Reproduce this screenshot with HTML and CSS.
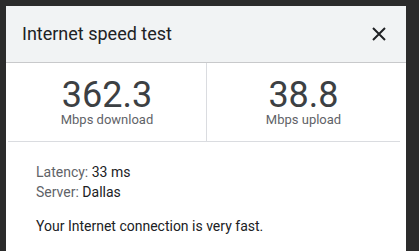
FILE: index.html
```html
<!DOCTYPE html>
<html>
<head>
<meta charset="utf-8">
<link rel="stylesheet" href="styles.css">
</head>
<body>
<div class="dialog">
  <div class="header">
    <div class="title">Internet speed test</div>
    <svg class="close" width="14" height="14" viewBox="0 0 14 14"><path d="M1 1L13 13M13 1L1 13" stroke="#202124" stroke-width="2" fill="none"/></svg>
  </div>
  <div class="stats">
    <div class="stat">
      <div class="num">362.3</div>
      <div class="unit">Mbps download</div>
    </div>
    <div class="stat">
      <div class="num">38.8</div>
      <div class="unit">Mbps upload</div>
    </div>
  </div>
  <div class="details">
    <div class="line"><span class="label">Latency:</span> 33 ms</div>
    <div class="line"><span class="label">Server:</span> Dallas</div>
    <div class="summary">Your Internet connection is very fast.</div>
  </div>
</div>
</body>
</html>
```
FILE: styles.css
```css
html, body {
  margin: 0;
  padding: 0;
  background: #2b2b2b;
  height: 100%;
  overflow: hidden;
}
body {
  padding: 6px 13px 0 6px;
  box-sizing: border-box;
  font-family: Roboto, "Noto Sans", sans-serif;
}
.dialog {
  background: #fff;
  height: 100%;
  display: flex;
  flex-direction: column;
}
.header {
  background: #f1f3f4;
  height: 57px;
  flex: none;
  display: flex;
  align-items: center;
  justify-content: space-between;
  padding: 0 20px 1px 16px;
  border-bottom: 1px solid #c8c9cb;
  box-sizing: border-box;
}
.title {
  font-size: 18px;
  color: #202124;
}
.close {
  display: block;
}
.stats {
  display: grid;
  grid-template-columns: 198px 194px;
  margin: 0 6px 0 2px;
  height: 79px;
  flex: none;
  border-bottom: 1px solid #dadce0;
  box-sizing: border-box;
}
.stat {
  display: flex;
  flex-direction: column;
  align-items: center;
  padding-top: 14px;
}
.stat + .stat {
  border-left: 1px solid #dadce0;
}
.num {
  font-size: 36px;
  line-height: 36px;
  color: #3c4043;
}
.unit {
  font-size: 13px;
  line-height: 14px;
  color: #5f6368;
}
.details {
  padding: 20px 30px;
  font-size: 14px;
  color: #202124;
}
.line {
  line-height: 20px;
}
.label {
  color: #5f6368;
}
.summary {
  margin-top: 14px;
  line-height: 20px;
}
```
